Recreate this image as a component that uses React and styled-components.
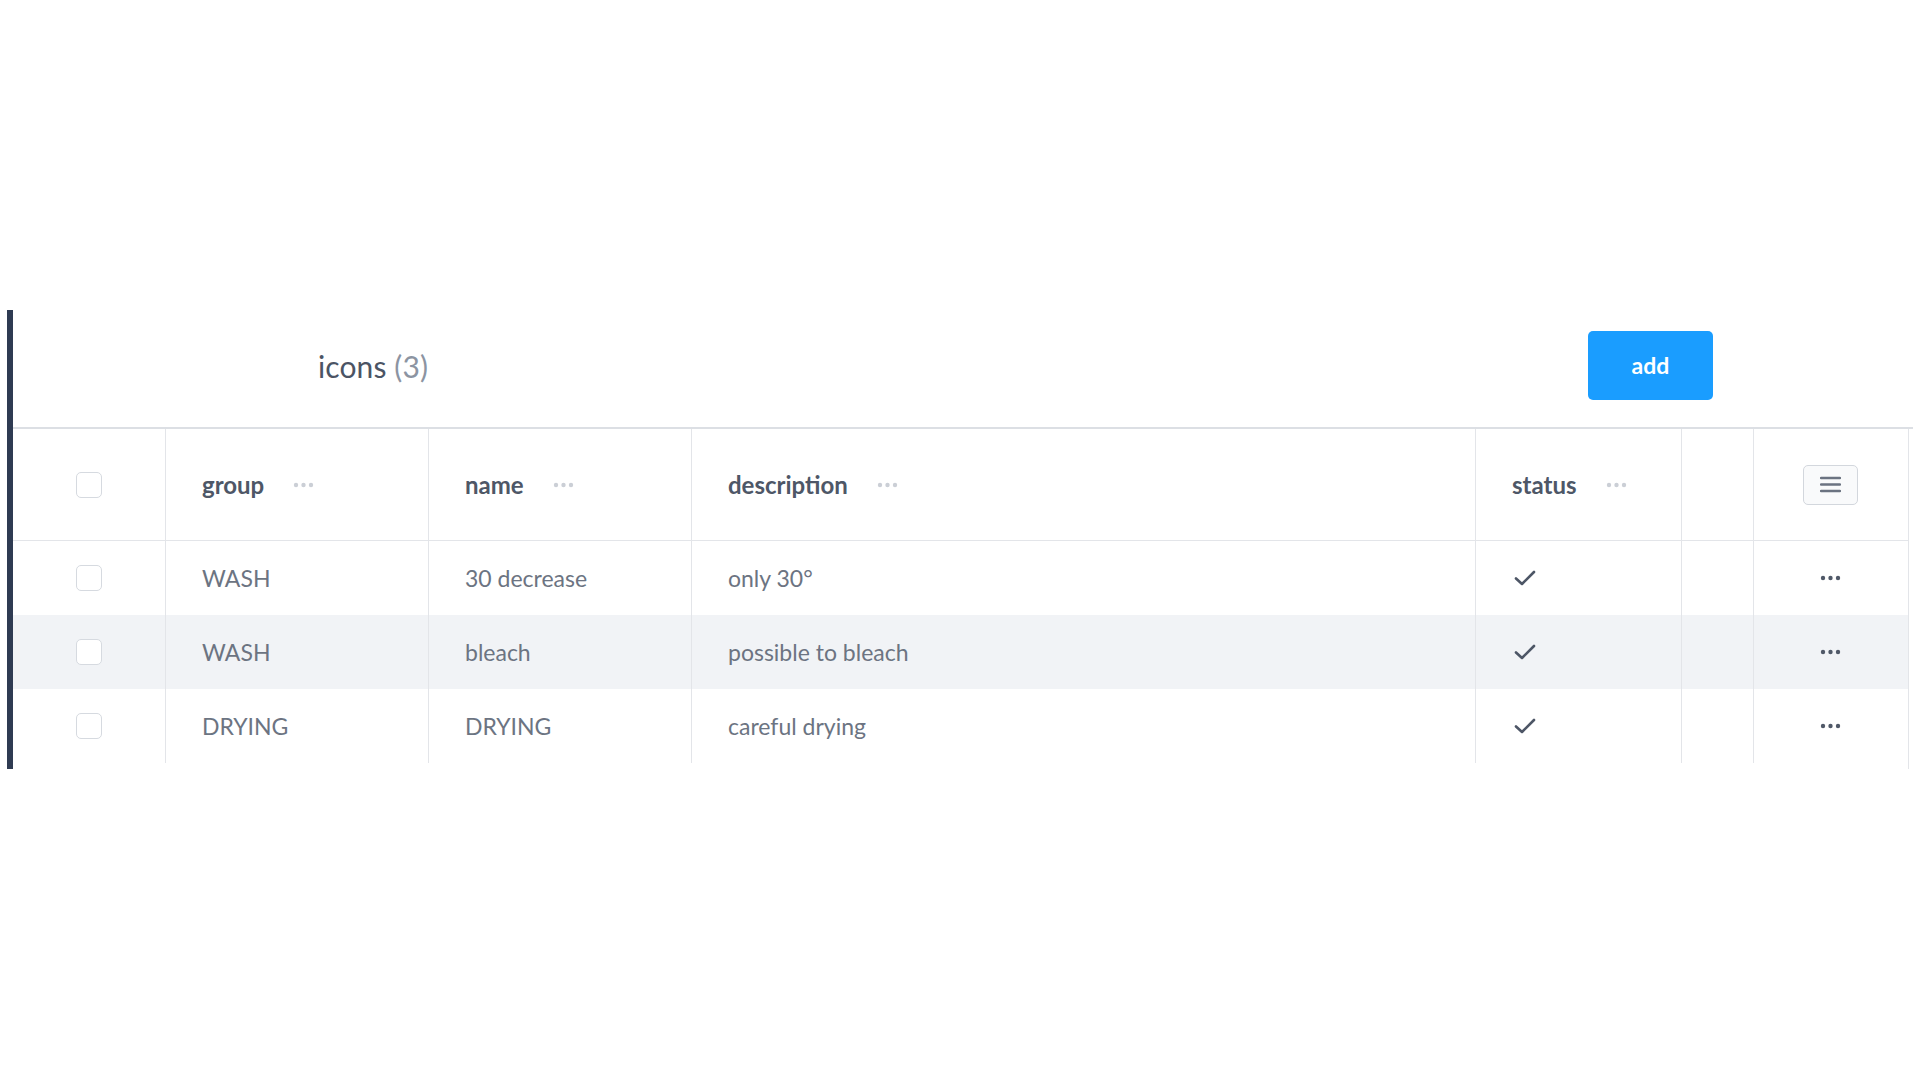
import styled, { createGlobalStyle } from "styled-components";

const GlobalStyle = createGlobalStyle`
    body {
        margin: 0;
        background: #ffffff;
        font-family: Lato, "Open Sans", sans-serif;
    }
`;

const rows = [
    { id: 1, group: "WASH", name: "30 decrease", description: "only 30°", status: true },
    { id: 2, group: "WASH", name: "bleach", description: "possible to bleach", status: true },
    { id: 3, group: "DRYING", name: "DRYING", description: "careful drying", status: true },
];

const columns = "153px 263px 263px 784px 206px 72px 153px";

function Dots({ color }) {
    return (
        <svg width="21" height="6" viewBox="0 0 21 6">
            <circle cx="3" cy="3" r="2.2" fill={color} />
            <circle cx="10.5" cy="3" r="2.2" fill={color} />
            <circle cx="18" cy="3" r="2.2" fill={color} />
        </svg>
    );
}

function Check() {
    return (
        <svg width="22" height="16" viewBox="0 0 22 16">
            <polyline points="2,8.5 8,14 20,2" fill="none" stroke="#4d5666" strokeWidth="2.6" strokeLinecap="round" strokeLinejoin="round" />
        </svg>
    );
}

function Burger() {
    return (
        <svg width="21" height="17" viewBox="0 0 21 17">
            <line x1="1" y1="2" x2="20" y2="2" stroke="#6b7381" strokeWidth="2.4" strokeLinecap="round" />
            <line x1="1" y1="8.5" x2="20" y2="8.5" stroke="#6b7381" strokeWidth="2.4" strokeLinecap="round" />
            <line x1="1" y1="15" x2="20" y2="15" stroke="#6b7381" strokeWidth="2.4" strokeLinecap="round" />
        </svg>
    );
}

export default function App() {
    return (
        <>
            <GlobalStyle />
            <Page>
                <Panel>
                    <TopBar>
                        <Title>
                            icons <span>(3)</span>
                        </Title>
                        <AddButton>add</AddButton>
                    </TopBar>
                    <TableWrap>
                        <HeaderRow>
                            <Cell center><Checkbox /></Cell>
                            <Cell><HeadLabel>group</HeadLabel><Dots color="#cbcfd6" /></Cell>
                            <Cell><HeadLabel>name</HeadLabel><Dots color="#cbcfd6" /></Cell>
                            <Cell><HeadLabel>description</HeadLabel><Dots color="#cbcfd6" /></Cell>
                            <Cell><HeadLabel>status</HeadLabel><Dots color="#cbcfd6" /></Cell>
                            <Cell />
                            <Cell center><MenuButton><Burger /></MenuButton></Cell>
                        </HeaderRow>
                        {rows.map((row, i) => (
                            <BodyRow key={row.id} striped={i % 2 === 1 ? 1 : 0}>
                                <Cell center><Checkbox /></Cell>
                                <Cell>{row.group}</Cell>
                                <Cell>{row.name}</Cell>
                                <Cell>{row.description}</Cell>
                                <Cell><CheckWrap>{row.status ? <Check /> : ""}</CheckWrap></Cell>
                                <Cell />
                                <Cell center><Dots color="#505968" /></Cell>
                            </BodyRow>
                        ))}
                    </TableWrap>
                </Panel>
            </Page>
        </>
    );
}

const Page = styled.div`
    padding-top: 310px;
    padding-left: 7px;
    height: 1080px;
    box-sizing: border-box;
`;

const Panel = styled.div`
    width: 1906px;
    border-left: 6px solid #2f3b52;
    box-sizing: border-box;
`;

const TopBar = styled.div`
    height: 119px;
    box-sizing: border-box;
    border-bottom: 2px solid #dcdfe4;
    padding: 0 200px 10px 305px;

    display: flex;
    align-items: center;
    justify-content: space-between;
`;

const Title = styled.h1`
    margin: 5px 0 0;
    font-size: 30px;
    font-weight: 400;
    color: #4b5464;
    letter-spacing: 0.1px;

    span {
        color: #8c94a2;
    }
`;

const AddButton = styled.button`
    width: 125px;
    height: 69px;
    border: none;
    border-radius: 5px;
    background-color: #1a9dff;
    color: white;
    font-family: Lato, "Open Sans", sans-serif;
    font-size: 23px;
    font-weight: 700;
    margin-top: 3px;
`;

const TableWrap = styled.div`
    width: 1895px;
    border-right: 1px solid #e3e5e9;
    padding-bottom: 6px;
`;

const HeaderRow = styled.div`
    display: grid;
    grid-template-columns: ${columns};
    height: 111px;
    border-bottom: 1px solid #e3e5e9;

    color: #4e5767;
    font-weight: 700;
    font-size: 24px;
`;

const BodyRow = styled.div`
    display: grid;
    grid-template-columns: ${columns};
    height: 74px;
    background-color: ${props => props.striped ? "#f1f3f6" : "transparent"};

    color: #6c7482;
    font-size: 23px;
`;

const Cell = styled.div`
    box-sizing: border-box;
    border-right: 1px solid #e3e5e9;
    padding-left: ${props => props.center ? "0" : "36px"};

    display: flex;
    align-items: center;
    justify-content: ${props => props.center ? "center" : "flex-start"};

    &:last-child {
        border-right: none;
    }
`;

const HeadLabel = styled.span`
    margin-right: 29px;
`;

const CheckWrap = styled.span`
    display: flex;
    margin-left: 2px;
`;

const Checkbox = styled.div`
    width: 26px;
    height: 26px;
    box-sizing: border-box;
    border: 1.5px solid #d6dae0;
    border-radius: 5px;
    background: white;
`;

const MenuButton = styled.div`
    width: 55px;
    height: 40px;
    box-sizing: border-box;
    border: 1.5px solid #d3d7dd;
    border-radius: 5px;
    background: #f9fafb;

    display: flex;
    align-items: center;
    justify-content: center;
`;
